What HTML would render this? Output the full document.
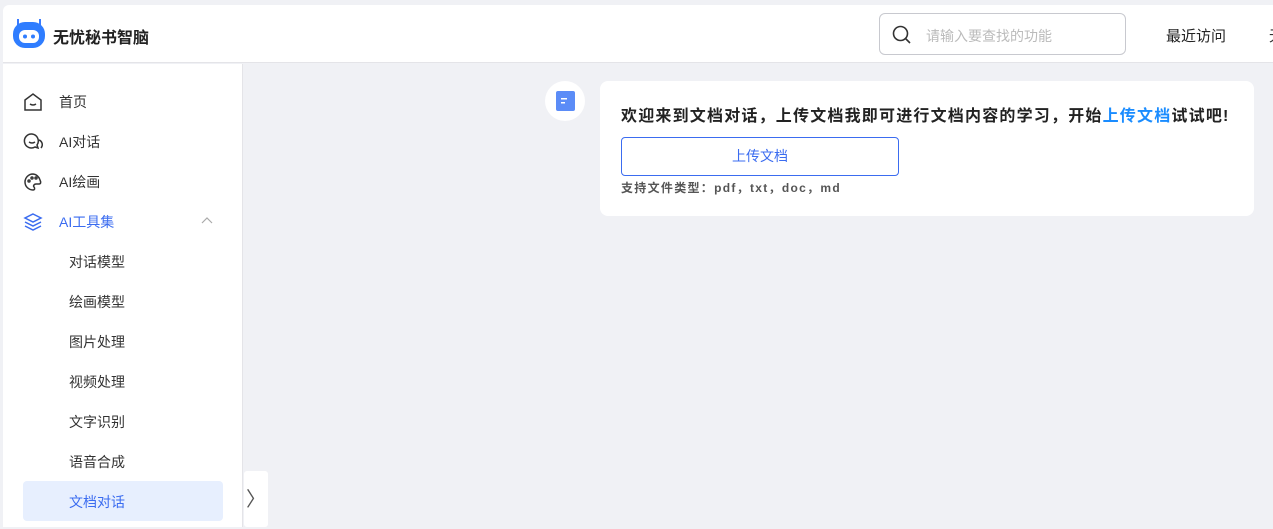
<!DOCTYPE html>
<html><head><meta charset="utf-8"><style>
*{margin:0;padding:0;box-sizing:border-box}
body{width:1273px;height:527px;overflow:hidden;background:#f0f1f5;font-family:"Liberation Sans","Noto Sans CJK SC",sans-serif;color:#333;position:relative}
.top{position:absolute;left:3px;top:5px;width:1270px;height:58px;background:#fff;border-bottom:1px solid #e4e4e8;border-top-left-radius:6px}
.logo{position:absolute;left:10px;top:14px}
.brand{position:absolute;left:50px;top:19px;font-size:16px;font-weight:bold;color:#222}
.search{position:absolute;left:876px;top:8px;width:247px;height:42px;border:1px solid #c8c9cf;border-radius:6px}
.search span{position:absolute;left:46px;top:12px;font-size:14px;color:#bbb}
.recent{position:absolute;left:1163px;top:20px;font-size:15px;color:#222}
.side{position:absolute;left:3px;top:64px;width:240px;height:463px;background:#fff;border-right:1px solid #e4e4e8}
.item{position:absolute;left:0;height:40px;width:240px;font-size:14px;color:#333}
.item .t{position:absolute;left:56px;top:10px}
.item svg{position:absolute;left:20px;top:10px}
.sub{position:absolute;left:66px;font-size:14px;color:#333}
.act{position:absolute;left:20px;top:417px;width:200px;height:40px;background:#e7effe;border-radius:4px}
.tog{position:absolute;left:244px;top:471px;width:24px;height:56px;background:#fff;border-radius:3px;font-size:20px;color:#555;text-align:center;line-height:58px}
.av{position:absolute;left:545px;top:81px;width:40px;height:40px;border-radius:50%;background:#fff}
.card{position:absolute;left:600px;top:81px;width:654px;height:135px;background:#fff;border-radius:8px}
.card h{position:absolute;left:21px;top:21px;font-size:16px;font-weight:bold;color:#222;white-space:nowrap;letter-spacing:1.2px}
.btn{position:absolute;left:21px;top:56px;width:278px;height:39px;border:1px solid #3b6cf0;border-radius:4px;text-align:center;line-height:37px;color:#3b6cf0;font-size:14px}
.note{position:absolute;left:21px;top:98px;font-size:12px;font-weight:bold;color:#555;letter-spacing:1.3px}
</style></head><body>
<div class="top">
<svg class="logo" width="32" height="30" viewBox="0 0 32 30"><rect x="4" y="0" width="2" height="8" fill="#3a7bff"/><rect x="26" y="0" width="2" height="8" fill="#3a7bff"/><rect x="0" y="3" width="32" height="26" rx="12" fill="#2f7dff"/><rect x="6" y="11" width="20" height="13" rx="6" fill="#fff"/><circle cx="12" cy="17.5" r="2" fill="#2f7dff"/><circle cx="20" cy="17.5" r="2" fill="#2f7dff"/></svg>
<div class="brand">无忧秘书智脑</div>
<div class="search"><svg style="position:absolute;left:12px;top:11px" width="20" height="20" viewBox="0 0 20 20"><circle cx="8.5" cy="8.5" r="7" fill="none" stroke="#333" stroke-width="1.6"/><path d="M13.5 13.5L18 18" stroke="#333" stroke-width="1.6"/></svg><span>请输入要查找的功能</span></div>
<div class="recent">最近访问</div>
<div style="position:absolute;left:1266px;top:20px;font-size:15px">无</div>
</div>
<div class="side">
<div class="item" style="top:18px"><svg width="20" height="20" viewBox="0 0 20 20" fill="none" stroke="#333" stroke-width="1.5"><path d="M2 8L10 2L18 8V18H2Z"/><path d="M7 12q3 2 6 0"/></svg><span class="t">首页</span></div>
<div class="item" style="top:58px"><svg width="20" height="20" viewBox="0 0 20 20" fill="none" stroke="#333" stroke-width="1.5"><path d="M9 2a7 7 0 1 0 3 13l3 1-1-3A7 7 0 0 0 9 2z"/><path d="M6 10q3 2 6 0"/><path d="M16 8a5 5 0 0 1 2 8"/></svg><span class="t">AI对话</span></div>
<div class="item" style="top:98px"><svg width="20" height="20" viewBox="0 0 20 20" fill="none" stroke="#333" stroke-width="1.5"><path d="M10 2a8 8 0 1 0 0 16c2 0 2-2 1-3s0-3 2-3h3c2 0 2-2 1-4A8 8 0 0 0 10 2z"/><circle cx="6" cy="9" r="1"/><circle cx="9" cy="6" r="1"/><circle cx="13" cy="6" r="1"/></svg><span class="t">AI绘画</span></div>
<div class="item" style="top:138px;color:#3b6cf0"><svg width="20" height="20" viewBox="0 0 20 20" fill="none" stroke="#3b6cf0" stroke-width="1.5"><path d="M10 2L18 6L10 10L2 6Z"/><path d="M2 10L10 14L18 10"/><path d="M2 14L10 18L18 14"/></svg><span class="t">AI工具集</span><svg style="left:198px;top:14px" width="12" height="8" viewBox="0 0 12 8"><path d="M1 7L6 2L11 7" fill="none" stroke="#aaa" stroke-width="1.2"/></svg></div>
<div class="sub" style="top:188px">对话模型</div>
<div class="sub" style="top:228px">绘画模型</div>
<div class="sub" style="top:268px">图片处理</div>
<div class="sub" style="top:308px">视频处理</div>
<div class="sub" style="top:348px">文字识别</div>
<div class="sub" style="top:388px">语音合成</div>
<div class="act"></div>
<div class="sub" style="top:428px;color:#3b6cf0">文档对话</div>
</div>
<div class="tog">〉</div>
<div class="av"><svg style="position:absolute;left:10px;top:9px" width="22" height="22" viewBox="0 0 22 22"><rect x="1" y="1" width="19" height="20" rx="2" fill="#5b8cf7"/><rect x="6" y="8" width="6" height="1.5" fill="#fff"/><rect x="6" y="12" width="4" height="1.5" fill="#fff"/></svg></div>
<div class="card">
<h>欢迎来到文档对话，上传文档我即可进行文档内容的学习，开始<span style="color:#1a8cff">上传文档</span>试试吧!</h>
<div class="btn">上传文档</div>
<div class="note">支持文件类型：pdf，txt，doc，md</div>
</div>
</body></html>
